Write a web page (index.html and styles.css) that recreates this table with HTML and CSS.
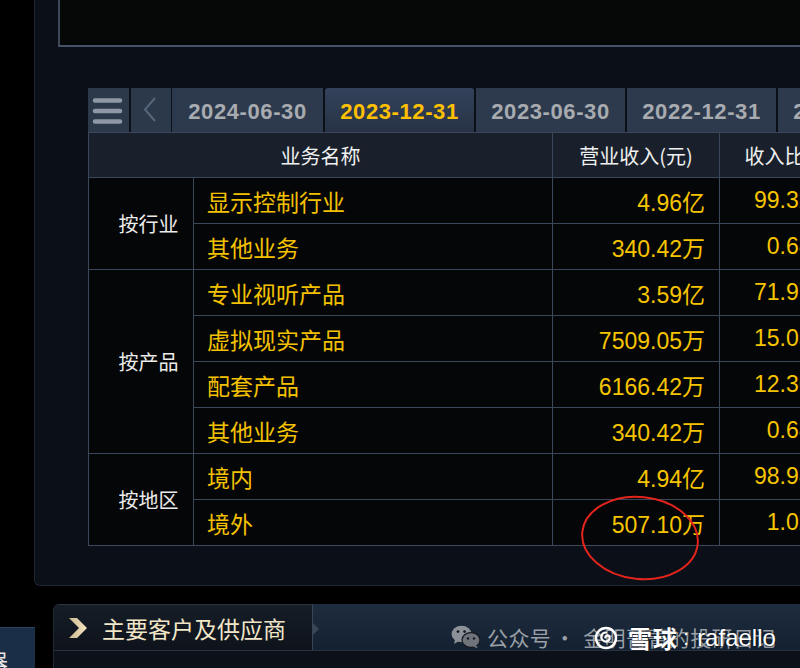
FILE: index.html
```html
<!DOCTYPE html>
<html lang="zh-CN">
<head>
<meta charset="utf-8">
<title>主营构成</title>
<link rel="stylesheet" href="styles.css">
</head>
<body>
<div class="page">
  <section class="panel">
    <div class="topbox"></div>
    <div class="tabs">
      <div class="tbtn menu">
        <svg width="41" height="44" viewBox="0 0 41 44"><g stroke="#8f99a6" stroke-width="4.5" stroke-linecap="round"><line x1="7" y1="12.5" x2="32" y2="12.5"/><line x1="7" y1="23" x2="32" y2="23"/><line x1="7" y1="33.5" x2="32" y2="33.5"/></g></svg>
      </div>
      <div class="tbtn arrow">
        <svg width="40" height="44" viewBox="0 0 40 44"><polyline points="24,10 14,21.5 24,33" fill="none" stroke="#56667d" stroke-width="2"/></svg>
      </div>
      <div class="tab first">2024-06-30</div>
      <div class="tab active">2023-12-31</div>
      <div class="tab">2023-06-30</div>
      <div class="tab">2022-12-31</div>
      <div class="tab">2022-06-30</div>
    </div>
    <div class="grid">
      <div class="hd span2">业务名称</div>
      <div class="hd">营业收入(元)</div>
      <div class="hd">收入比例</div>

      <div class="grp g2">按行业</div>
      <div class="nm">显示控制行业</div><div class="num">4.96亿</div><div class="num pct">99.32%</div>
      <div class="nm">其他业务</div><div class="num">340.42万</div><div class="num pct">0.68%</div>

      <div class="grp g4">按产品</div>
      <div class="nm">专业视听产品</div><div class="num">3.59亿</div><div class="num pct">71.97%</div>
      <div class="nm">虚拟现实产品</div><div class="num">7509.05万</div><div class="num pct">15.05%</div>
      <div class="nm">配套产品</div><div class="num">6166.42万</div><div class="num pct">12.36%</div>
      <div class="nm">其他业务</div><div class="num">340.42万</div><div class="num pct">0.68%</div>

      <div class="grp g2">按地区</div>
      <div class="nm">境内</div><div class="num">4.94亿</div><div class="num pct">98.98%</div>
      <div class="nm">境外</div><div class="num">507.10万</div><div class="num pct">1.02%</div>
    </div>
  </section>

  <div class="lower">
    <div class="side"><span class="side-ch">器</span></div>
    <section class="panel2">
      <div class="p2head">
        <div class="p2title">
          <svg class="chev" width="22" height="22" viewBox="0 0 22 22"><defs><linearGradient id="cg" x1="0" y1="0" x2="1" y2="0"><stop offset="0" stop-color="#c9b68c"/><stop offset="1" stop-color="#f6e7c2"/></linearGradient></defs><polygon points="1,1 9,1 19,11 9,21 1,21 11,11" fill="url(#cg)"/></svg>
          <span>主要客户及供应商</span>
          <i class="notch"></i>
        </div>
        <div class="p2rest"></div>
      </div>
    </section>
  </div>

  <svg class="ring" width="140" height="100" viewBox="0 0 140 100"><ellipse cx="70" cy="50" rx="58" ry="41" transform="rotate(6 70 50)" fill="none" stroke="#e3241d" stroke-width="2"/></svg>

  <div class="wm">
    <svg class="wx" width="30" height="24" viewBox="0 0 30 24"><ellipse cx="10.5" cy="9" rx="10" ry="8.3" fill="#8d9298"/><path d="M4 14.5 L3 19 L8 16 Z" fill="#8d9298"/><ellipse cx="20" cy="15" rx="9" ry="7.4" fill="#6f747a" stroke="#15191f" stroke-width="1.2"/><path d="M25 20 L27 23.5 L22 21.6 Z" fill="#6f747a"/><circle cx="7" cy="6.6" r="1.4" fill="#15191f"/><circle cx="13.6" cy="6.6" r="1.4" fill="#15191f"/><circle cx="17" cy="13.5" r="1.2" fill="#15191f"/><circle cx="23" cy="13.5" r="1.2" fill="#15191f"/></svg>
    <span class="wtext">公众号</span><span class="wdot">·</span><span class="wtext">金明菁菁的投研日记</span>
  </div>
  <div class="xq">
    <svg class="xqlogo" width="24" height="24" viewBox="0 0 24 24"><circle cx="12" cy="12" r="10" fill="none" stroke="#ffffff" stroke-width="2.4"/><path d="M12 6.5 C7 6.5 6 12 9 14.5 C12 17 16.5 14.5 15.5 11 C14.8 8.8 11.5 9 11.4 11.5" fill="none" stroke="#ffffff" stroke-width="2.2" stroke-linecap="round"/></svg>
    <span class="xqname">雪球</span><span class="xqcolon">:</span><span class="xquser">rafaello</span>
  </div>
</div>
</body>
</html>
```

FILE: styles.css
```css
html, body {
  margin: 0;
  padding: 0;
  background: #000;
  overflow: hidden;
  width: 800px;
  height: 668px;
}
.page {
  position: relative;
  width: 800px;
  height: 668px;
  overflow: hidden;
  font-family: "Noto Sans CJK SC", "Liberation Sans", sans-serif;
}
.panel {
  margin-left: 34px;
  width: 900px;
  height: 586px;
  box-sizing: border-box;
  background: #0b0f17;
  border-left: 1px solid #1e2632;
  border-bottom: 1px solid #1e2632;
  border-bottom-left-radius: 6px;
  padding-top: 0;
}
.topbox {
  margin-left: 23px;
  height: 45px;
  background: #060808;
  border-left: 2px solid #3d4859;
  border-bottom: 2px solid #46526a;
}
.tabs {
  margin-top: 41px;
  margin-left: 53px;
  display: flex;
  height: 44px;
}
.tbtn {
  height: 44px;
  background: #2c394b;
}
.menu { width: 41px; margin-right: 2px; }
.arrow { width: 40px; margin-right: 1px; }
.tab {
  width: 149px;
  margin-right: 2px;
  height: 44px;
  box-sizing: border-box;
  padding-top: 4px;
  background: #2d3a4d;
  color: #a8abaf;
  font-family: "Liberation Sans", Arial, sans-serif;
  font-weight: bold;
  font-size: 22px;
  letter-spacing: 0.6px;
  display: flex;
  align-items: center;
  justify-content: center;
}
.tab.first { width: 151px; }
.tab.active {
  color: #ffc000;
  background: linear-gradient(#33425a, #273345);
  border-top-left-radius: 3px;
  border-top-right-radius: 3px;
}
.grid {
  margin-left: 53px;
  width: 765px;
  display: grid;
  grid-template-columns: 104px 358px 166px 129px;
  grid-template-rows: 44px repeat(8, 45px);
  gap: 1px;
  padding: 1px;
  background: #3b475b;
}
.grid > div {
  display: flex;
  align-items: center;
}
.hd {
  background: #19202b;
  color: #f0f0f0;
  font-size: 20px;
  justify-content: center;
}
.span2 { grid-column: span 2; }
.grp {
  background: #050607;
  color: #ececec;
  font-size: 20px;
  justify-content: center;
  padding-left: 15px;
  grid-column: 1;
}
.g2 { grid-row: span 2; }
.g4 { grid-row: span 4; }
.nm {
  background: #050607;
  color: #f3c100;
  font-size: 23px;
  padding-left: 13px;
}
.num {
  background: #050607;
  color: #f6c400;
  font-family: "Liberation Sans", "Noto Sans CJK SC", sans-serif;
  font-size: 23px;
  justify-content: flex-end;
  padding-right: 14px;
}
.num.pct { padding-right: 17px; }
.lower {
  display: flex;
  margin-top: 18px;
  height: 64px;
}
.side {
  width: 35px;
  margin-top: 23px;
  height: 41px;
  background: #1b2e47;
  border-top: 1px solid #2c4260;
  box-sizing: border-box;
  overflow: hidden;
  display: flex;
  align-items: flex-end;
}
.side-ch {
  margin-left: -14px;
  margin-bottom: -3px;
  color: #e6e6e6;
  font-size: 22px;
  line-height: 1;
}
.panel2 {
  margin-left: 18px;
  flex: 1;
  background: #0c1119;
  border-top-left-radius: 6px;
  overflow: hidden;
  border-left: 1px solid #202a37;
}
.p2head {
  display: flex;
  height: 46px;
  border-bottom: 1px solid #28323f;
}
.p2title {
  position: relative;
  width: 259px;
  display: flex;
  align-items: center;
  background: linear-gradient(#161d27, #0e131b);
  border-top: 1px solid #2a3340;
  border-right: 1px solid #3a4555;
  box-sizing: border-box;
  color: #f1e6c8;
  font-size: 23px;
}
.chev { margin-left: 14px; margin-right: 12px; margin-top: 1px; }
.notch {
  position: absolute;
  right: -7px;
  top: 18px;
  width: 0;
  height: 0;
  border-top: 6px solid transparent;
  border-bottom: 6px solid transparent;
  border-left: 6px solid #3a4555;
}
.p2rest {
  flex: 1;
  background: linear-gradient(#1e2c3f, #142131);
}
.ring {
  position: absolute;
  left: 570px;
  top: 488px;
}
.wm {
  position: absolute;
  left: 451px;
  top: 624px;
  display: flex;
  align-items: center;
  height: 26px;
  color: #9a9fa5;
  font-size: 21px;
  line-height: 1;
}
.wx { margin-right: 6px; }
.wtext { letter-spacing: 0.4px; }
.wdot { margin: 0 8px 0 3px; }
.xq {
  position: absolute;
  left: 594px;
  top: 624px;
  display: flex;
  align-items: center;
  height: 28px;
  color: #ffffff;
  line-height: 1;
  text-shadow: 0 0 2px rgba(0,0,0,0.8);
}
.xqlogo { margin-right: 10px; }
.xqname { font-size: 24px; font-weight: bold; letter-spacing: 1px; }
.xqcolon { font-family: "Liberation Sans", sans-serif; font-size: 22px; margin: 0 8px 0 5px; }
.xquser { font-family: "Liberation Sans", sans-serif; font-size: 24px; }
```
